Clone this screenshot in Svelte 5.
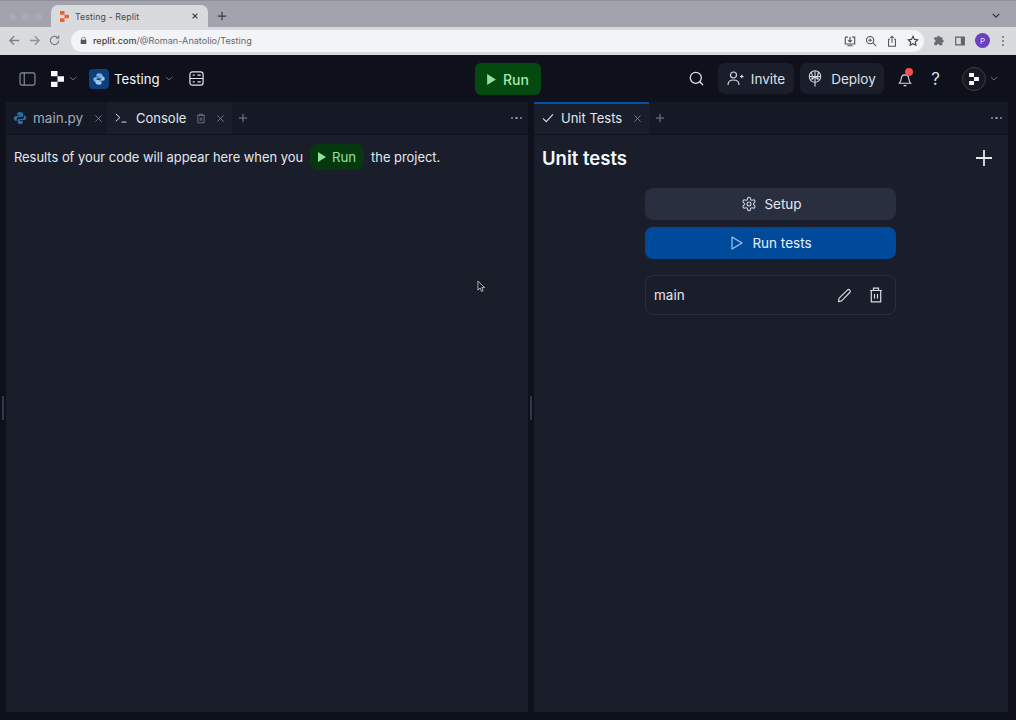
<script>
  const logo = "M1 1h5.500v4.500H1zM6.500 5.500H12V10H6.500zM1 10h5.500v4.500H1z";
</script>

<div class="page">
  <div class="tabstrip">
    <div class="lights"><i></i><i></i><i></i></div>
    <div class="btab">
      <svg class="favicon" viewBox="1 1 11 13.500"><path d={logo} fill="#e8642c" /></svg>
      <span class="btitle">Testing - Replit</span>
      <svg class="bclose" viewBox="0 0 10 10"><path d="M2 2l6 6M8 2l-6 6" stroke="#3a3b3f" stroke-width="1.400" /></svg>
    </div>
    <svg class="bplus" viewBox="0 0 12 12"><path d="M6 1v10M1 6h10" stroke="#3c3d42" stroke-width="1.500" /></svg>
    <svg class="bmenu" viewBox="0 0 10 6"><path d="M1 1l4 4 4-4" fill="none" stroke="#2d2e33" stroke-width="1.500" /></svg>
  </div>

  <div class="toolbar">
    <svg class="nav" viewBox="0 0 14 14"><path d="M12 7H2M6.500 2.500L2 7l4.500 4.500" fill="none" stroke="#7d8086" stroke-width="1.400" /></svg>
    <svg class="nav" viewBox="0 0 14 14"><path d="M2 7h10M7.500 2.500L12 7l-4.500 4.500" fill="none" stroke="#8d9096" stroke-width="1.400" /></svg>
    <svg class="nav" viewBox="0 0 14 14"><path d="M11.500 7a4.500 4.500 0 1 1-1.300-3.200M11.500 1.500v3h-3" fill="none" stroke="#7d8086" stroke-width="1.300" /></svg>
    <div class="omnibox">
      <svg class="lock" viewBox="0 0 10 12"><path d="M2 5V3.500a3 3 0 0 1 6 0V5M1 5h8v6H1z" fill="#55575c" /><path d="M3 5V3.500a2 2 0 0 1 4 0V5" fill="#f5f6f8" /></svg>
      <span class="url"><b>replit.com</b>/@Roman-Anatolio/Testing</span>
      <div class="omni-icons">
        <svg viewBox="0 0 14 14"><path d="M1.500 2.500h3M9.500 2.500h3v8h-11v-8M7 2v6M4.800 6L7 8.200 9.200 6M4 12.500h6" fill="none" stroke="#4f5156" stroke-width="1.300" /></svg>
        <svg viewBox="0 0 14 14"><circle cx="6" cy="6" r="4.200" fill="none" stroke="#4f5156" stroke-width="1.300" /><path d="M9 9l4 4M4 6h4M6 4v4" stroke="#4f5156" stroke-width="1.200" /></svg>
        <svg viewBox="0 0 14 14"><path d="M4.500 5H3v8h8V5H9.500M7 9V1.500M5 3.500l2-2 2 2" fill="none" stroke="#4f5156" stroke-width="1.200" /></svg>
        <svg viewBox="0 0 14 14"><path d="M7 1.500l1.700 3.600 3.800.5-2.800 2.600.7 3.800L7 10.200l-3.400 1.800.7-3.800L1.500 5.600l3.800-.5z" fill="none" stroke="#3f4146" stroke-width="1.300" /></svg>
      </div>
    </div>
    <div class="tool-icons">
      <svg viewBox="0 0 14 14"><path d="M5 2.500a1.500 1.500 0 0 1 3 0H11v3a1.500 1.500 0 0 1 0 3v3.500H7.500a1.500 1.500 0 0 0-3 0H1.500V8.500a1.500 1.500 0 0 0 0-3V2.500z" fill="#696b70" /></svg>
      <svg viewBox="0 0 14 14"><path d="M2 2.500h10v9H2z" fill="none" stroke="#606267" stroke-width="1.400" /><path d="M8 2.500h4v9H8z" fill="#606267" /></svg>
      <span class="profile">P</span>
      <span class="kebab"><i></i><i></i><i></i></span>
    </div>
  </div>

  <header class="ide-head">
    <div class="head-left">
      <svg class="ic-side" viewBox="0 0 18 15"><rect x="1" y="1" width="16" height="13" rx="2" fill="none" stroke="#8b919d" stroke-width="1.200" /><path d="M5.500 1v13" stroke="#8b919d" stroke-width="1.200" /></svg>
      <svg class="ic-logo" viewBox="1 1 11 13.500"><path d={logo} fill="#f5f9fc" /></svg>
      <svg class="chev l1" viewBox="0 0 10 6"><path d="M1 1l4 4 4-4" fill="none" stroke="#6f7682" stroke-width="1.200" /></svg>
      <span class="pybadge">
        <svg viewBox="0 0 16 16"><path d="M8 1.500c-3 0-3 1.200-3 2.500v1.500h3.200V6H3.500C2 6 1.500 7 1.500 8.300s.6 2.700 2 2.700H5V9.300C5 8 6 7 7.300 7h2.900C11.400 7 12 6.400 12 5.200V4c0-1.500-1.500-2.500-4-2.500z" fill="#75b3e2" /><path d="M8 14.500c3 0 3-1.200 3-2.500v-1.500H7.800V10h4.700c1.500 0 2-1 2-2.300S14 5 12.600 5H11v1.700C11 8 10 9 8.700 9H5.800C4.600 9 4 9.600 4 10.800V12c0 1.500 1.500 2.500 4 2.500z" fill="#9cc8ea" /></svg>
      </span>
      <span class="proj">Testing</span>
      <svg class="chev l2" viewBox="0 0 10 6"><path d="M1 1l4 4 4-4" fill="none" stroke="#6f7682" stroke-width="1.200" /></svg>
      <svg class="ic-db" viewBox="0 0 16 16"><rect x="1" y="1" width="14" height="14" rx="2.500" fill="none" stroke="#dfe3e9" stroke-width="1.300" /><path d="M1 8h14M4 4.500h2M4 11.500h2M9 4.500h3.500M9 11.500h3.500" stroke="#dfe3e9" stroke-width="1.300" /></svg>
    </div>
    <button class="run-main"><svg viewBox="1 1 8 10"><path d="M1 1l8 5-8 5z" fill="#8ee29a" /></svg>Run</button>
    <div class="head-right">
      <svg class="ic-search" viewBox="0 0 15 15"><circle cx="6.800" cy="6.800" r="5.500" fill="none" stroke="#dde1e7" stroke-width="1.300" /><path d="M10.800 10.800l3.200 3.200" stroke="#dde1e7" stroke-width="1.300" /></svg>
      <button class="hbtn invite">
        <svg viewBox="0 0 17 15"><circle cx="6.500" cy="4" r="3" fill="none" stroke="#d5d9e0" stroke-width="1.200" /><path d="M1 14c0-3.500 2.500-5 5.500-5s5.500 1.500 5.500 5M13 5.500h3.500M14.750 3.750v3.500" fill="none" stroke="#d5d9e0" stroke-width="1.200" /></svg>
        Invite
      </button>
      <button class="hbtn deploy">
        <svg viewBox="0 0 14 17"><circle cx="7" cy="6.500" r="5.700" fill="none" stroke="#d5d9e0" stroke-width="1.100" /><path d="M1.300 6.500h11.400M7 .8v15.700M3.800 9.700L7 6.500l3.200 3.200M3.500 2c1 3 1 6 .3 7.700M10.500 2c-1 3-1 6-.3 7.700" fill="none" stroke="#d5d9e0" stroke-width="1.100" /></svg>
        Deploy
      </button>
      <span class="bell">
        <svg viewBox="0 0 15 16"><path d="M1.500 12h12c-1.500-1.500-1.800-3-2-5-.2-2.500-1.800-4-4-4s-3.800 1.500-4 4c-.2 2-.5 3.500-2 5zM6 14.500h3" fill="none" stroke="#d5d9e0" stroke-width="1.200" /></svg>
        <i class="dot"></i>
      </span>
      <span class="help">?</span>
      <span class="avatar"><svg viewBox="1 1 11 13.500"><path d={logo} fill="#f5f9fc" /></svg></span>
      <svg class="chev l3" viewBox="0 0 10 6"><path d="M1 1l4 4 4-4" fill="none" stroke="#6f7682" stroke-width="1.200" /></svg>
    </div>
  </header>

  <main class="work">
    <section class="panel left">
      <div class="tabs">
        <div class="tab muted">
          <svg class="t-py" viewBox="0 0 16 16"><path d="M8 1c-3 0-3.200 1.200-3.200 2.500V5h3.400v.6H3.300C1.800 5.600 1 6.700 1 8.200s.8 2.800 2.200 2.800h1.300V9.200c0-1.300 1.100-2.400 2.400-2.400h3c1.100 0 1.800-.7 1.800-1.800V3.500C11.700 2 10.500 1 8 1z" fill="#2a6f9e" /><path d="M8 15c3 0 3.200-1.200 3.200-2.500V11H7.800v-.6h4.900c1.500 0 2.300-1.100 2.300-2.600S14.200 5 12.800 5h-.3v1.800c0 1.300-1.100 2.400-2.400 2.400h-3c-1.100 0-1.800.7-1.800 1.800v1.500C5.300 14 6.500 15 8 15z" fill="#2a6f9e" /></svg>
          <span>main.py</span>
          <svg class="x" viewBox="0 0 10 10"><path d="M1.500 1.500l7 7M8.500 1.500l-7 7" stroke="#7b818c" stroke-width="1" /></svg>
        </div>
        <div class="tab active console">
          <svg class="t-con" viewBox="0 0 16 12"><path d="M1 1l5 4.500L1 10M8 11h6" fill="none" stroke="#dde1e7" stroke-width="1.200" /></svg>
          <span>Console</span>
          <svg class="t-trash" viewBox="0 0 12 14"><path d="M1 3h10M4 3V1.500h4V3M2 3v9.500h8V3M5 6v4M7 6v4" fill="none" stroke="#7b818c" stroke-width="1" /></svg>
          <svg class="x" viewBox="0 0 10 10"><path d="M1.500 1.500l7 7M8.500 1.500l-7 7" stroke="#7b818c" stroke-width="1" /></svg>
        </div>
        <svg class="plus" viewBox="0 0 12 12"><path d="M6 1v10M1 6h10" stroke="#7b818c" stroke-width="1.200" /></svg>
        <span class="dots"><i></i><i></i><i></i></span>
      </div>
      <p class="msg">
        <span>Results of your code will appear here when you</span>
        <span class="run-inline"><svg viewBox="1 1 8 10"><path d="M1 1l8 5-8 5z" fill="#8ee29a" /></svg>Run</span>
        <span>the project.</span>
      </p>
      <i class="grip"></i>
      <svg class="cursor" viewBox="0 0 10 14"><path d="M1 1v10l2.500-2.300L5 12.500l1.800-.8-1.500-3.500H8.500z" fill="#1a1a1a" stroke="#e8e8e8" stroke-width=".8" /></svg>
    </section>

    <section class="panel right">
      <div class="tabs">
        <div class="tab active unit">
          <svg class="t-check" viewBox="0 0 13 11"><path d="M1 6l3.500 3.500L12 1.500" fill="none" stroke="#dde1e7" stroke-width="1.200" /></svg>
          <span>Unit Tests</span>
          <svg class="x" viewBox="0 0 10 10"><path d="M1.500 1.500l7 7M8.500 1.500l-7 7" stroke="#7b818c" stroke-width="1" /></svg>
        </div>
        <svg class="plus" viewBox="0 0 12 12"><path d="M6 1v10M1 6h10" stroke="#7b818c" stroke-width="1.200" /></svg>
        <span class="dots"><i></i><i></i><i></i></span>
      </div>
      <div class="ut-head">
        <h1>Unit tests</h1>
        <svg viewBox="0 0 18 18"><path d="M9 1v16M1 9h16" stroke="#e4e7ec" stroke-width="1.800" /></svg>
      </div>
      <div class="ut-col">
        <button class="setup">
          <svg viewBox="0 0 24 24"><circle cx="12" cy="12" r="3" fill="none" stroke="#d5d9e0" stroke-width="1.600" /><path d="M12.220 2h-.44a2 2 0 0 0-2 2v.18a2 2 0 0 1-1 1.730l-.43.250a2 2 0 0 1-2 0l-.15-.08a2 2 0 0 0-2.730.730l-.22.380a2 2 0 0 0 .730 2.730l.15.100a2 2 0 0 1 1 1.720v.510a2 2 0 0 1-1 1.740l-.15.090a2 2 0 0 0-.73 2.730l.22.380a2 2 0 0 0 2.730.730l.15-.08a2 2 0 0 1 2 0l.43.250a2 2 0 0 1 1 1.730V20a2 2 0 0 0 2 2h.44a2 2 0 0 0 2-2v-.18a2 2 0 0 1 1-1.730l.43-.25a2 2 0 0 1 2 0l.15.080a2 2 0 0 0 2.730-.730l.22-.390a2 2 0 0 0-.73-2.730l-.15-.08a2 2 0 0 1-1-1.740v-.5a2 2 0 0 1 1-1.740l.15-.090a2 2 0 0 0 .73-2.730l-.22-.38a2 2 0 0 0-2.730-.73l-.15.080a2 2 0 0 1-2 0l-.43-.25a2 2 0 0 1-1-1.730V4a2 2 0 0 0-2-2z" fill="none" stroke="#d5d9e0" stroke-width="1.600" /></svg>
          Setup
        </button>
        <button class="runtests">
          <svg viewBox="0 0 12 14"><path d="M1 1l10 6-10 6z" fill="none" stroke="#9cc6f5" stroke-width="1.200" stroke-linejoin="round" /></svg>
          Run tests
        </button>
        <div class="file">
          <span>main</span>
          <svg class="pen" viewBox="0 0 16 16"><path d="M1.500 14.500l.8-3.600 8.700-8.700a1.800 1.800 0 0 1 2.600 2.600l-8.700 8.900z" fill="none" stroke="#d5d9e0" stroke-width="1.200" stroke-linejoin="round" /></svg>
          <svg class="trash" viewBox="0 0 14 16"><path d="M1 3.500h12M4.500 3.500V1.200h5v2.300M2.300 3.500v11.300h9.400V3.500M5.500 7v4.500M8.500 7v4.500" fill="none" stroke="#d5d9e0" stroke-width="1.200" /></svg>
        </div>
      </div>
    </section>
  </main>
</div>

<style>
  :global(body) {
    margin: 0;
    background: #0e111c;
  }
  .page {
    width: 1016px;
    height: 720px;
    display: flex;
    flex-direction: column;
    overflow: hidden;
    background: #0e111c;
    font-family: "Inter", "Noto Sans", sans-serif;
    color: #f5f9fc;
  }
  svg {
    display: block;
    flex: none;
  }
  button {
    font: inherit;
    border: 0;
    color: inherit;
    padding: 0;
    display: flex;
    align-items: center;
    justify-content: center;
  }

  /* browser chrome */
  .tabstrip {
    height: 27px;
    flex: none;
    display: flex;
    align-items: flex-end;
    background: linear-gradient(#8e909a 0 1px, #a1a3ad 1px);
    position: relative;
  }
  .lights {
    display: flex;
    gap: 6px;
    width: 51px;
    padding: 0 0 7px 9px;
    box-sizing: border-box;
  }
  .lights i {
    width: 7px;
    height: 7px;
    border-radius: 50%;
    background: #a9abb3;
  }
  .btab {
    width: 157px;
    height: 22px;
    background: #d9dade;
    border-radius: 7px 7px 0 0;
    display: flex;
    align-items: center;
    padding: 0 9px;
    box-sizing: border-box;
  }
  .favicon {
    width: 9px;
    height: 11px;
  }
  .btitle {
    margin-left: 6px;
    font-size: 8.800px;
    color: #47494e;
    flex: 1;
    letter-spacing: 0.100px;
  }
  .bclose {
    width: 8px;
    height: 8px;
  }
  .bplus {
    width: 10px;
    height: 10px;
    margin: 0 0 6px 9px;
  }
  .bmenu {
    width: 8px;
    height: 5px;
    margin: 0 16px 9px auto;
  }
  .toolbar {
    height: 28px;
    flex: none;
    box-sizing: border-box;
    background: #d9dade;
    display: flex;
    align-items: center;
    padding: 0 0 1px 8px;
    gap: 7px;
  }
  .nav {
    width: 13px;
    height: 13px;
  }
  .omnibox {
    margin-left: 3px;
    width: 853px;
    height: 22px;
    box-sizing: border-box;
    background: #f3f4f7;
    border-radius: 11px;
    display: flex;
    align-items: center;
    padding: 0 5px 0 9px;
  }
  .lock {
    width: 7px;
    height: 9px;
  }
  .url {
    margin-left: 6px;
    font-size: 9.100px;
    color: #66686e;
  }
  .url b {
    font-weight: 500;
    color: #3d3f44;
  }
  .omni-icons {
    margin-left: auto;
    display: flex;
    gap: 9px;
  }
  .omni-icons svg,
  .tool-icons svg {
    width: 12px;
    height: 12px;
  }
  .tool-icons {
    display: flex;
    align-items: center;
    margin-left: 2px;
    gap: 9px;
  }
  .profile {
    width: 15px;
    height: 15px;
    border-radius: 50%;
    background: #6a3fc0;
    color: #e6dcf8;
    font-size: 8px;
    display: flex;
    align-items: center;
    justify-content: center;
  }
  .kebab {
    display: flex;
    flex-direction: column;
    gap: 2px;
    margin-left: 3px;
  }
  .kebab i {
    width: 2px;
    height: 2px;
    border-radius: 50%;
    background: #6e7075;
  }

  /* IDE header */
  .ide-head {
    height: 47px;
    flex: none;
    display: flex;
    align-items: center;
    position: relative;
    background: #0e111c;
    padding-left: 19px;
    box-sizing: border-box;
  }
  .head-left {
    display: flex;
    align-items: center;
  }
  .ic-side {
    width: 17px;
    height: 14px;
  }
  .ic-logo {
    width: 13px;
    height: 16px;
    margin-left: 15px;
  }
  .chev {
    width: 8px;
    height: 5px;
  }
  .chev.l1 {
    margin-left: 5px;
  }
  .pybadge {
    width: 20px;
    height: 20px;
    margin-left: 12px;
    border-radius: 4px;
    background: #0f3f79;
    display: flex;
    align-items: center;
    justify-content: center;
  }
  .pybadge svg {
    width: 14px;
    height: 14px;
  }
  .proj {
    margin-left: 5px;
    font-size: 13.200px;
  }
  .chev.l2 {
    margin-left: 5px;
  }
  .ic-db {
    width: 15px;
    height: 15px;
    margin-left: 16px;
  }
  .run-main {
    position: absolute;
    left: 475px;
    top: 8px;
    width: 66px;
    height: 32px;
    border-radius: 6px;
    background: #044a10;
    color: #a3e9ac;
    font-size: 14px;
    font-weight: 500;
    gap: 7px;
  }
  .run-main svg {
    width: 9px;
    height: 11px;
  }
  .head-right {
    margin-left: auto;
    display: flex;
    align-items: center;
    padding-right: 18px;
  }
  .ic-search {
    width: 15px;
    height: 15px;
    margin-left: 1px;
  }
  .hbtn {
    height: 31px;
    border-radius: 7px;
    background: #1a1e2b;
    color: #dde1e7;
    font-size: 13.500px;
    gap: 7px;
    box-sizing: border-box;
  }
  .hbtn svg {
    width: 17px;
    height: 15px;
  }
  .invite {
    width: 76px;
    margin-left: 14px;
  }
  .deploy {
    width: 84px;
    margin-left: 6px;
    gap: 9px;
  }
  .deploy svg {
    height: 17px;
    width: 14px;
  }
  .bell {
    position: relative;
    margin-left: 14px;
    width: 15px;
    height: 16px;
  }
  .bell svg {
    width: 14px;
    height: 15px;
    margin-top: 1px;
  }
  .dot {
    position: absolute;
    left: 7px;
    top: -3px;
    width: 8px;
    height: 8px;
    border-radius: 50%;
    background: #f44d52;
  }
  .help {
    margin-left: 15px;
    font-size: 17px;
    width: 15px;
    text-align: center;
    color: #dde1e7;
  }
  .avatar {
    margin-left: 19px;
    width: 22px;
    height: 22px;
    border: 1px solid #3a3f4a;
    border-radius: 50%;
    background: #16191f;
    display: flex;
    align-items: center;
    justify-content: center;
  }
  .avatar svg {
    width: 10px;
    height: 12px;
  }
  .chev.l3 {
    margin-left: 4px;
  }

  /* work area */
  .work {
    flex: 1;
    min-height: 0;
    display: flex;
    gap: 6px;
    padding: 0 8px 8px 6px;
  }
  .panel {
    background: #1a1e2b;
    position: relative;
    display: flex;
    flex-direction: column;
    min-width: 0;
  }
  .left {
    width: 522px;
  }
  .right {
    flex: 1;
  }
  .tabs {
    height: 32px;
    flex: none;
    background: #151926;
    display: flex;
    align-items: stretch;
    border-bottom: 1px solid #10131e;
    position: relative;
  }
  .tab {
    display: flex;
    align-items: center;
    font-size: 13px;
    box-sizing: border-box;
    height: 32px;
  }
  .tab.muted {
    color: #a3a9b4;
    font-size: 13.500px;
    width: 101px;
    padding-left: 7px;
  }
  .tab.active {
    background: #1a1e2b;
    color: #e4e7ec;
  }
  .t-py {
    width: 14px;
    height: 14px;
    margin-right: 6px;
  }
  .x {
    width: 9px;
    height: 9px;
  }
  .muted .x {
    margin-left: 11px;
  }
  .console {
    width: 125px;
    padding-left: 8px;
  }
  .t-con {
    width: 13px;
    height: 10px;
    margin-right: 8px;
  }
  .t-trash {
    width: 10px;
    height: 11px;
    margin-left: 10px;
  }
  .console .x {
    margin-left: 10px;
  }
  .plus {
    width: 10px;
    height: 10px;
    align-self: center;
    margin-left: 6px;
  }
  .dots {
    margin-left: auto;
    margin-right: 6px;
    align-self: center;
    display: flex;
    gap: 2px;
  }
  .dots i {
    width: 2.500px;
    height: 2.500px;
    border-radius: 50%;
    background: #8b919d;
  }
  .msg {
    margin: 9px 0 0 8px;
    display: flex;
    align-items: center;
    font-size: 12.900px;
    color: #e4e7ec;
  }
  .run-inline {
    margin: 0 7px 0 7px;
    width: 54px;
    height: 26px;
    border-radius: 8px;
    background: #06380f;
    color: #8ee29a;
    font-size: 13.300px;
    display: flex;
    align-items: center;
    justify-content: center;
    gap: 6px;
  }
  .run-inline svg {
    width: 8px;
    height: 10px;
  }
  .grip {
    position: absolute;
    right: -4px;
    top: 294px;
    width: 2px;
    height: 24px;
    border-radius: 1px;
    background: #343947;
  }
  .left::before {
    content: "";
    position: absolute;
    left: -4px;
    top: 294px;
    width: 2px;
    height: 24px;
    background: #343947;
  }
  .cursor {
    position: absolute;
    left: 471px;
    top: 178px;
    width: 9px;
    height: 13px;
  }
  .unit {
    width: 115px;
    padding: 0 0 2px 8px;
    border-top: 2px solid #0053a6;
  }
  .t-check {
    width: 12px;
    height: 10px;
    margin-right: 7px;
  }
  .unit .x {
    margin-left: 11px;
  }
  .unit + .plus {
    margin-left: 6px;
  }
  .ut-head {
    display: flex;
    align-items: center;
    justify-content: space-between;
    padding: 10px 15px 0 8px;
    height: 26px;
  }
  h1 {
    margin: 0;
    font-size: 18.500px;
    font-weight: 600;
    color: #f5f9fc;
  }
  .ut-head svg {
    width: 18px;
    height: 18px;
    margin-top: -1px;
  }
  .ut-col {
    width: 251px;
    margin: 17px 0 0 111px;
    display: flex;
    flex-direction: column;
  }
  .setup,
  .runtests {
    width: 100%;
    height: 32px;
    border-radius: 8px;
    font-size: 13.500px;
    gap: 7px;
  }
  .setup {
    background: #2a2f40;
    color: #e4e7ec;
    padding-left: 2px;
  }
  .setup svg {
    width: 16px;
    height: 16px;
  }
  .runtests {
    margin-top: 7px;
    background: #004a9c;
    color: #e6f0fb;
    gap: 9px;
    padding-left: 2px;
  }
  .runtests svg {
    width: 12px;
    height: 14px;
  }
  .file {
    margin-top: 16px;
    height: 40px;
    box-sizing: border-box;
    border: 1px solid #2a2f3c;
    border-radius: 8px;
    display: flex;
    align-items: center;
    padding: 0 12px 0 8px;
    font-size: 13.500px;
    color: #e4e7ec;
  }
  .pen {
    width: 15px;
    height: 15px;
    margin-left: auto;
  }
  .trash {
    width: 14px;
    height: 16px;
    margin-left: 17px;
  }
</style>
